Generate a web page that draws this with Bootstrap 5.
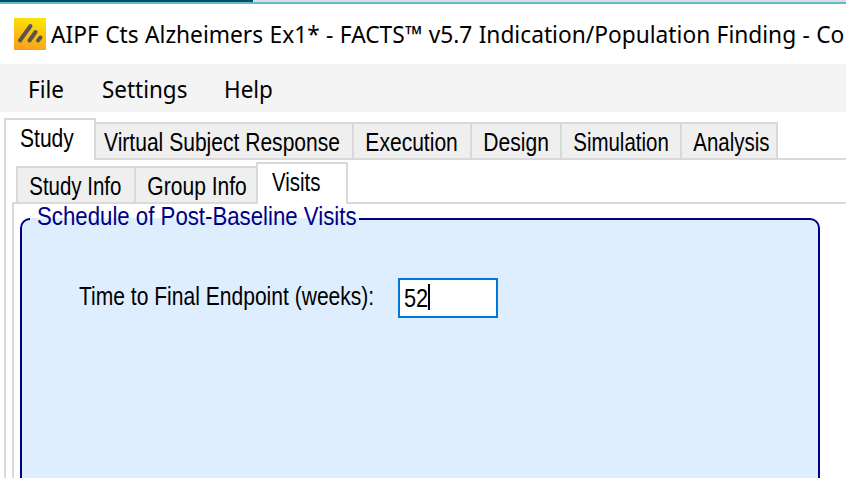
<!DOCTYPE html>
<html lang="en">
<head>
<meta charset="utf-8">
<title>FACTS</title>
<link href="https://cdn.jsdelivr.net/npm/bootstrap@5.3.0/dist/css/bootstrap.min.css" rel="stylesheet">
<style>
  body { width: 846px; height: 478px; background: #fff; color: #000; font-family: "Noto Sans", sans-serif; font-size: 24px; line-height: 1; }
  .strip { height: 4px; border-bottom: 2px solid #5fbccb; background: #ddd; }
  .strip-dark { width: 253px; height: 2px; background: #0a4f63; }
  .title-row { height: 60px; padding-left: 14px; }
  .title-text { margin: 0 0 0 5px; font-size: 23.5px; line-height: 32px; display: inline-block; word-spacing: .5px; transform: scaleX(.967); transform-origin: 0 0; width: 0; }
  .menu-row { height: 48px; background: #f4f4f4; padding-left: 28px; }
  .menu-row a { color: #000; font-size: 23.5px; line-height: 50px; transform: scaleX(.955); transform-origin: 0 0; }
  .m-file { width: 74px; } .m-set { width: 122px; }
  .gdi { display: inline-block; font-family: "Liberation Sans", sans-serif; font-size: 25px; line-height: 28px; transform: scaleX(.842); transform-origin: 0 0; white-space: nowrap; width: 0; }
  .slim { transform: scaleX(.818); }
  .outer { margin: 6px 0 0 4px; height: 360px; }
  .outer-tabs { height: 42px; }
  .tabx { background: #efefef; border: 2px solid #d9d9d9; border-left-width: 0; height: 38px; flex: none; }
  .tabx.on { background: #fff; border-left-width: 2px; border-bottom: 0; }
  .tabx.first { border-left-width: 2px; }
  .tabx.last { border-right-width: 0; }
  .on .gdi { margin-left: 14px; }
  .w-a { width: 92px; } .w-b { width: 258px; } .w-c { width: 118px; } .w-d { width: 90px; } .w-e { width: 120px; } .w-f { width: 96px; }
  .rest { flex: 1; border-bottom: 2px solid #d9d9d9; }
  .outer-body { height: 318px; border-left: 2px solid #d9d9d9; padding: 2px 0 0 6px; }
  .inner-tabs { height: 42px; }
  .stub { width: 4px; height: 2px; background: #d9d9d9; }
  .inner-body { height: 274px; border-left: 2px solid #d9d9d9; padding: 14px 26px 0 6px; }
  .group-box { height: 280px; background: #dfeeff; border: 2px solid #000084; border-radius: 10px 10px 0 0; }
  .legend-x { left: 8px; top: -18px; width: 329px; height: 28px; padding-left: 7px; color: #000084; background: linear-gradient(transparent 16px, #dfeeff 16px); }
  .legend-x .gdi { transform: scaleX(.889); }
  .field-row { padding: 58px 0 0 57px; }
  .field-label { width: 319px; height: 28px; margin-top: 4px; }
  .entry { width: 100px; height: 40px; border: 2px solid #0078d7; background: #fff; padding: 4px 0 0 4px; }
  .entry .gdi { transform: scaleX(.87); }
  .caret { width: 2px; height: 26px; background: #000; margin-left: 24px; }
</style>
<script src="https://cdn.jsdelivr.net/npm/bootstrap@5.3.0/dist/js/bootstrap.bundle.min.js"></script>
</head>
<body class="overflow-hidden">
  <div class="strip"><div class="strip-dark"></div></div>
  <header class="title-row d-flex align-items-center text-nowrap overflow-hidden">
    <svg class="flex-shrink-0" width="32" height="32" viewBox="0 0 32 32">
      <defs><linearGradient id="gold" x1=".6" y1="0" x2=".4" y2="1"><stop offset="0" stop-color="#fbe304"/><stop offset="1" stop-color="#f9a01f"/></linearGradient></defs>
      <rect width="32" height="32" fill="url(#gold)"/>
      <g stroke="#5b5548" stroke-width="4" stroke-linecap="round"><path d="M6 22.5L16.5 8"/><path d="M15.5 22.5L21.5 14"/><path d="M24 22.5L26.5 19.5"/></g>
    </svg>
    <span class="title-text">AIPF Cts Alzheimers Ex1* - FACTS™ v5.7 Indication/Population Finding - Co</span>
  </header>
  <nav class="menu-row d-flex">
    <a class="m-file text-decoration-none">File</a><a class="m-set text-decoration-none">Settings</a><a class="text-decoration-none">Help</a>
  </nav>
  <main class="outer">
    <div class="outer-tabs d-flex align-items-end">
      <div class="tabx on h-100 w-a"><span class="gdi mt-1">Study</span></div>
      <div class="tabx w-b"><span class="gdi ms-2 mt-1">Virtual Subject Response</span></div>
      <div class="tabx w-c"><span class="gdi ms-2 mt-1 ps-1">Execution</span></div>
      <div class="tabx w-d"><span class="gdi ms-2 mt-1 ps-1">Design</span></div>
      <div class="tabx w-e"><span class="gdi slim ms-2 mt-1 ps-1">Simulation</span></div>
      <div class="tabx w-f"><span class="gdi slim ms-2 mt-1 ps-1">Analysis</span></div>
      <div class="rest"></div>
    </div>
    <div class="outer-body">
      <div class="inner-tabs d-flex align-items-end">
        <div class="stub"></div>
        <div class="tabx first w-e"><span class="gdi slim ms-2 mt-1 ps-1">Study Info</span></div>
        <div class="tabx last w-e"><span class="gdi ms-2 mt-1 ps-1">Group Info</span></div>
        <div class="tabx on h-100 w-a"><span class="gdi slim mt-1">Visits</span></div>
        <div class="rest"></div>
      </div>
      <div class="inner-body">
        <section class="group-box position-relative">
          <div class="legend-x position-absolute"><span class="gdi">Schedule of Post-Baseline Visits</span></div>
          <div class="field-row d-flex">
            <div class="field-label"><span class="gdi">Time to Final Endpoint (weeks):</span></div>
            <div class="entry d-flex"><span class="gdi">52</span><div class="caret"></div></div>
          </div>
        </section>
      </div>
    </div>
  </main>
</body>
</html>
